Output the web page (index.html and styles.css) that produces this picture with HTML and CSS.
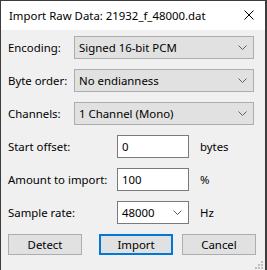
FILE: index.html
```html
<!DOCTYPE html>
<html lang="en">
<head>
  <meta charset="UTF-8">
  <title>Import Raw Data</title>
  <link rel="stylesheet" href="styles.css">
</head>
<body>
  <div class="window">
    <div class="titlebar">
      <span class="title">Import Raw Data: 21932_f_48000.dat</span>
      <svg class="close" width="10" height="10" viewBox="0 0 10 10">
        <path d="M0.5 0.5 L9.5 9.5 M9.5 0.5 L0.5 9.5" stroke="#000" stroke-width="1"/>
      </svg>
    </div>

    <div class="content">
      <div class="row">
        <label class="lbl">Encoding:</label>
        <div class="combo wide">
          <span>Signed 16-bit PCM</span>
          <svg class="chev" width="9" height="5" viewBox="0 0 9 5"><path d="M0.5 0.5 L4.5 4.5 L8.5 0.5" fill="none" stroke="#606060"/></svg>
        </div>
      </div>
      <div class="row">
        <label class="lbl">Byte order:</label>
        <div class="combo wide">
          <span>No endianness</span>
          <svg class="chev" width="9" height="5" viewBox="0 0 9 5"><path d="M0.5 0.5 L4.5 4.5 L8.5 0.5" fill="none" stroke="#606060"/></svg>
        </div>
      </div>
      <div class="row">
        <label class="lbl">Channels:</label>
        <div class="combo wide">
          <span>1 Channel (Mono)</span>
          <svg class="chev" width="9" height="5" viewBox="0 0 9 5"><path d="M0.5 0.5 L4.5 4.5 L8.5 0.5" fill="none" stroke="#606060"/></svg>
        </div>
      </div>
      <div class="row">
        <label class="lbl long">Start offset:</label>
        <div class="field">0</div>
        <span class="unit">bytes</span>
      </div>
      <div class="row">
        <label class="lbl long">Amount to import:</label>
        <div class="field">100</div>
        <span class="unit">%</span>
      </div>
      <div class="row">
        <label class="lbl long">Sample rate:</label>
        <div class="field edit">
          <span>48000</span>
          <svg class="chev" width="9" height="5" viewBox="0 0 9 5"><path d="M0.5 0.5 L4.5 4.5 L8.5 0.5" fill="none" stroke="#606060"/></svg>
        </div>
        <span class="unit">Hz</span>
      </div>

      <div class="buttons">
        <button class="btn">Detect</button>
        <button class="btn default">Import</button>
        <button class="btn">Cancel</button>
      </div>
    </div>

    <svg class="grip" width="8" height="8" viewBox="0 0 8 8">
      <rect x="6" y="0" width="2" height="2" fill="#bdbdbd"/>
      <rect x="3" y="3" width="2" height="2" fill="#bdbdbd"/>
      <rect x="6" y="3" width="2" height="2" fill="#bdbdbd"/>
      <rect x="0" y="6" width="2" height="2" fill="#bdbdbd"/>
      <rect x="3" y="6" width="2" height="2" fill="#bdbdbd"/>
      <rect x="6" y="6" width="2" height="2" fill="#bdbdbd"/>
    </svg>
  </div>
</body>
</html>
```

FILE: styles.css
```css
html, body { margin: 0; padding: 0; }
body { font-family: "Noto Sans", "Open Sans", sans-serif; font-size: 11.4px; color: #000; width: 267px; height: 270px; overflow: hidden; }

.window { position: relative; box-sizing: border-box; width: 267px; height: 270px; background: #f0f0f0; border: 1px solid #3c3c3c; border-right-width: 2px; border-bottom: none; }

.titlebar { height: 29px; background: #fff; display: flex; align-items: center; padding: 0 11px 0 8px; }
.title { flex: 1; }
.close { display: block; margin-top: -1px; }

.content { padding: 6px 0 0 7px; }
.row { display: flex; align-items: center; height: 23px; margin-bottom: 10px; }
.lbl { width: 66px; }
.lbl.long { width: 109px; }

.combo { box-sizing: border-box; height: 23px; display: flex; align-items: center; justify-content: space-between; padding: 0 6px 0 4px; background: #e1e1e1; border: 1px solid #adadad; }
.combo.wide { width: 180px; }
.chev { display: block; }

.field { box-sizing: border-box; width: 72px; height: 23px; display: flex; align-items: center; justify-content: space-between; padding: 0 6px 0 4px; background: #fff; border: 1px solid #7a7a7a; }
.unit { margin-left: 11px; }

.buttons { display: flex; margin-top: 4px; }
.btn { box-sizing: border-box; width: 74px; height: 21px; padding: 0; font: inherit; color: #000; background: #e1e1e1; border: 1px solid #adadad; }
.btn.default { border: 2px solid #0078d7; margin-left: 17px; }
.btn + .btn:last-child { margin-left: 9px; }

.grip { position: absolute; right: 2px; bottom: 1px; }
```
